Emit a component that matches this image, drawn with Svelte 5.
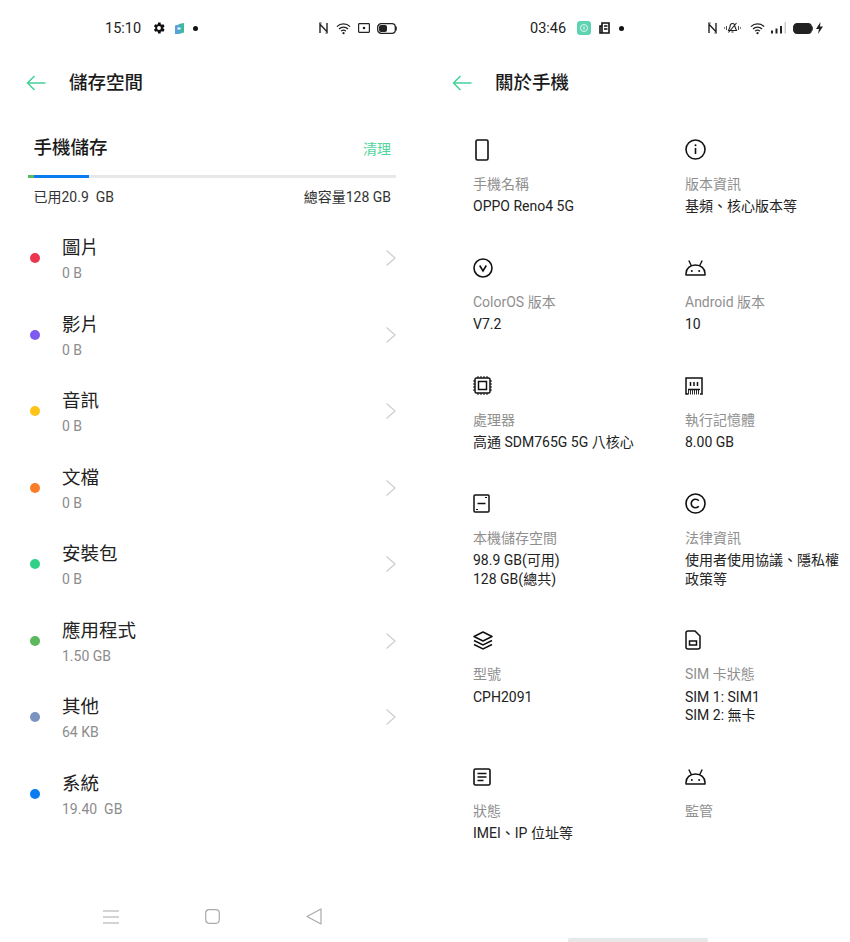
<script>
	const files = [
		{ name: '圖片', size: '0 B', color: '#e8374f', more: true },
		{ name: '影片', size: '0 B', color: '#7f5af0', more: true },
		{ name: '音訊', size: '0 B', color: '#fcc419', more: true },
		{ name: '文檔', size: '0 B', color: '#fb7c29', more: true },
		{ name: '安裝包', size: '0 B', color: '#2fd186', more: true },
		{ name: '應用程式', size: '1.50 GB', color: '#5cb85c', more: true },
		{ name: '其他', size: '64 KB', color: '#7b93c0', more: true },
		{ name: '系統', size: '19.40  GB', color: '#0a7cf0', more: false }
	];

	const specs = [
		{ icon: 'phone', label: '手機名稱', lines: ['OPPO Reno4 5G'] },
		{ icon: 'info', label: '版本資訊', lines: ['基頻、核心版本等'] },
		{ icon: 'version', label: 'ColorOS 版本', lines: ['V7.2'] },
		{ icon: 'android', label: 'Android 版本', lines: ['10'] },
		{ icon: 'cpu', label: '處理器', lines: ['高通 SDM765G 5G 八核心'] },
		{ icon: 'ram', label: '執行記憶體', lines: ['8.00 GB'] },
		{ icon: 'storage', label: '本機儲存空間', lines: ['98.9 GB(可用)', '128 GB(總共)'] },
		{ icon: 'legal', label: '法律資訊', lines: ['使用者使用協議、隱私權', '政策等'] },
		{ icon: 'layers', label: '型號', lines: ['CPH2091'] },
		{ icon: 'sim', label: 'SIM 卡狀態', lines: ['SIM 1: SIM1', 'SIM 2: 無卡'] },
		{ icon: 'status', label: '狀態', lines: ['IMEI、IP 位址等'] },
		{ icon: 'android', label: '監管', lines: [] }
	];
</script>

<div class="screen">
	<section class="panel">
		<div class="status left-status">
			<span class="time">15:10</span>
			<svg class="gear" width="14" height="14" viewBox="0 0 24 24"><path fill-rule="evenodd" d="M19.4 13a7.600 7.600 0 0 0 0-2l2.300-1.800-2.200-3.800-2.700 1.100a7.500 7.500 0 0 0-1.700-1L14.700 2.600h-4.400L9.900 5.500a7.500 7.500 0 0 0-1.700 1L5.500 5.400 3.300 9.200 5.600 11a7.600 7.600 0 0 0 0 2l-2.300 1.800 2.200 3.800 2.700-1.100a7.500 7.500 0 0 0 1.700 1l.4 2.900h4.400l.4-2.900a7.500 7.500 0 0 0 1.700-1l2.700 1.100 2.200-3.800zM12 15.300a3.300 3.300 0 1 1 0-6.600 3.300 3.300 0 0 1 0 6.600z" fill="#111"/></svg>
			<svg class="app" width="9" height="11" viewBox="0 0 9 11"><path d="M0 2.500l4-1V11H0z" fill="#5b9fe0"/><path d="M4 1l5-1v9.500L4 11z" fill="#3fb8a8"/><rect x="2.500" y="4.500" width="3" height="2" fill="#fff"/></svg>
			<span class="dot-note"></span>
			<span class="spacer"></span>
			<svg class="nfc" width="9" height="12" viewBox="0 0 9 12"><path d="M1 11V2.200L8 9.800V1" fill="none" stroke="#222" stroke-width="1.400"/><path d="M.5 1h2M6.500 11h2" stroke="#222" stroke-width="1.200"/></svg>
			<svg class="wifi-l" width="15" height="13" viewBox="0 0 16 13"><path d="M1 4.500a10 10 0 0 1 14 0M3.200 7a7 7 0 0 1 9.600 0M5.400 9.300a4 4 0 0 1 5.200 0" fill="none" stroke="#222" stroke-width="1.400"/><circle cx="8" cy="11.500" r="1.200" fill="#222"/></svg>
			<svg class="cast" width="12" height="10" viewBox="0 0 12 10"><rect x=".6" y=".6" width="10.800" height="8.800" rx=".8" fill="none" stroke="#222" stroke-width="1.200"/><circle cx="6" cy="5" r="1.300" fill="#222"/></svg>
			<svg class="batt" width="20" height="11" viewBox="0 0 20 11"><rect x=".7" y=".7" width="17.600" height="9.600" rx="3.400" fill="none" stroke="#222" stroke-width="1.300"/><rect x="2" y="2" width="8" height="7" rx="2" fill="#222"/><rect x="18.600" y="3.500" width="1.200" height="4" fill="#222"/></svg>
		</div>

		<header class="head">
			<svg class="back" width="20" height="16" viewBox="0 0 20 16"><path d="M19.500 8H1.500M8.500 1L1.500 8l7 7" fill="none" stroke="#45d199" stroke-width="1.500"/></svg>
			<h1 class="storage-title">儲存空間</h1>
		</header>

		<div class="usage-head">
			<h2>手機儲存</h2>
			<span class="clean">清理</span>
		</div>
		<div class="bar"><span class="bar-green"></span><span class="bar-blue"></span></div>
		<div class="usage-text">
			<span>已用20.9  GB</span>
			<span>總容量128 GB</span>
		</div>

		<ul class="files">
			{#each files as f}
				<li>
					<span class="dot" style:background={f.color}></span>
					<div class="file-text">
						<div class="file-name">{f.name}</div>
						<div class="file-size">{f.size}</div>
					</div>
					{#if f.more}
						<svg class="chev" width="12" height="18" viewBox="0 0 12 18"><path d="M1.500 1.500L10 9l-8.500 7.500" fill="none" stroke="#cfcfcf" stroke-width="1.300"/></svg>
					{/if}
				</li>
			{/each}
		</ul>

		<nav class="nav">
			<svg width="16" height="14" viewBox="0 0 16 14"><path d="M0 1h16M0 7h16M0 13h16" stroke="#aaa" stroke-width="1.200"/></svg>
			<svg width="15" height="15" viewBox="0 0 15 15"><rect x=".7" y=".7" width="13.600" height="13.600" rx="3.500" fill="none" stroke="#aaa" stroke-width="1.200"/></svg>
			<svg width="16" height="17" viewBox="0 0 16 17"><path d="M15 1v15L1 8.500z" fill="none" stroke="#aaa" stroke-width="1.200" stroke-linejoin="round"/></svg>
		</nav>
	</section>

	<section class="panel">
		<div class="status right-status">
			<span class="time">03:46</span>
			<svg class="badge" width="14" height="14" viewBox="0 0 14 14"><rect width="14" height="14" rx="3" fill="#5fd3b0"/><circle cx="7" cy="7" r="3.500" fill="none" stroke="#fff" stroke-width=".8"/><path d="M7 5.500v3" stroke="#fff"/></svg>
			<svg class="news" width="11" height="12" viewBox="0 0 11 12"><path d="M3 1h7v10H1V4h2zM3 4v7" fill="none" stroke="#111" stroke-width="1.600"/><path d="M5 4h3.500M5 7h3.500" stroke="#111" stroke-width="1.500"/></svg>
			<span class="dot-note"></span>
			<span class="spacer"></span>
			<svg class="nfc" width="9" height="12" viewBox="0 0 9 12"><path d="M1 11V2.200L8 9.800V1" fill="none" stroke="#222" stroke-width="1.400"/><path d="M.5 1h2M6.500 11h2" stroke="#222" stroke-width="1.200"/></svg>
			<svg class="mute" width="17" height="12" viewBox="0 0 17 12"><path d="M8.500 1.500c-2 0-2.500 2-2.500 3.500L4.500 8.500h8L11 5c0-1.500-.5-3.500-2.500-3.500zM7.500 10h2M4.500 10.500L12.500 1" fill="none" stroke="#222" stroke-width="1.100"/><path d="M2.500 4v4M.5 5.300v1.400M14.500 4v4M16.500 5.300v1.400" stroke="#333" stroke-width=".9"/></svg>
			<svg class="wifi-r" width="15" height="13" viewBox="0 0 16 13"><path d="M1 4.500a10 10 0 0 1 14 0M3.200 7a7 7 0 0 1 9.600 0M5.400 9.300a4 4 0 0 1 5.200 0" fill="none" stroke="#222" stroke-width="1.400"/><circle cx="8" cy="11.500" r="1.200" fill="#222"/></svg>
			<svg class="signal" width="15" height="12" viewBox="0 0 15 12"><rect x="0" y="8.500" width="2" height="3" fill="#222"/><rect x="4.500" y="6.500" width="2" height="5" fill="#222"/><rect x="9" y="4" width="2" height="7.500" fill="#222"/><rect x="13.500" y="0" width="1.500" height="11.500" fill="#ccc"/></svg>
			<svg class="batt-r" width="20" height="11" viewBox="0 0 20 11"><rect x=".7" y=".7" width="17.600" height="9.600" rx="3.400" fill="#222" stroke="#222" stroke-width="1.300"/><rect x="18.600" y="3.500" width="1.200" height="4" fill="#222"/></svg>
			<svg class="bolt" width="7" height="12" viewBox="0 0 7 12"><path d="M4.500 0L0 7h3L2 12l5-7.500H4z" fill="#222"/></svg>
		</div>

		<header class="head about-head">
			<svg class="back" width="20" height="16" viewBox="0 0 20 16"><path d="M19.500 8H1.500M8.500 1L1.500 8l7 7" fill="none" stroke="#45d199" stroke-width="1.500"/></svg>
			<h1 class="about-title">關於手機</h1>
		</header>

		<div class="specs">
			{#each specs as s}
				<div class="spec">
					<div class="icon">
						{#if s.icon === 'phone'}
							<svg class="nudge" width="14" height="22" viewBox="0 0 14 22"><rect x="1" y="1" width="12" height="20" rx="1.500" fill="none" stroke="#111" stroke-width="1.600"/></svg>
						{:else if s.icon === 'info'}
							<svg width="21" height="21" viewBox="0 0 21 21"><circle cx="10.500" cy="10.500" r="9.500" fill="none" stroke="#111" stroke-width="1.600"/><path d="M10.500 9v6" stroke="#111" stroke-width="1.600"/><circle cx="10.500" cy="6.300" r="1" fill="#111"/></svg>
						{:else if s.icon === 'version'}
							<svg width="20" height="20" viewBox="0 0 20 20"><circle cx="10" cy="10" r="9" fill="none" stroke="#111" stroke-width="1.600"/><path d="M6.700 7.500L10 13l3.300-5.500" fill="none" stroke="#111" stroke-width="1.600"/></svg>
						{:else if s.icon === 'android'}
							<svg width="21" height="16" viewBox="0 0 21 16"><path d="M1 15h19v-1.500C20 8.500 16 5 10.500 5S1 8.500 1 13.500z" fill="none" stroke="#111" stroke-width="1.500" stroke-linejoin="round"/><path d="M6.500 6L3.800 .5M14.500 6l2.700-5.500" stroke="#111" stroke-width="1.400"/><circle cx="6.800" cy="11" r="1" fill="#111"/><circle cx="14.200" cy="11" r="1" fill="#111"/></svg>
						{:else if s.icon === 'cpu'}
							<svg width="19" height="19" viewBox="0 0 19 19"><rect x="2" y="2" width="15" height="15" rx="1.500" fill="none" stroke="#111" stroke-width="1.500"/><rect x="5.500" y="5.500" width="8" height="8" fill="none" stroke="#111" stroke-width="1.500"/><path d="M5 0v2M8 0v2M11 0v2M14 0v2M5 17v2M8 17v2M11 17v2M14 17v2M0 5h2M0 8h2M0 11h2M0 14h2M17 5h2M17 8h2M17 11h2M17 14h2" stroke="#111"/></svg>
						{:else if s.icon === 'ram'}
							<svg width="18" height="18" viewBox="0 0 18 18"><path d="M3 17H1V1h16v16h-2M3 12.500h12" fill="none" stroke="#111" stroke-width="1.500"/><path d="M5.500 5v4M9 5v4M12.500 5v4" stroke="#111" stroke-width="1.500"/><path d="M3.500 13v4.500M5.500 13v4.500M7.500 13v4.500M9.500 13v4.500M11.500 13v4.500M13.500 13v4.500" stroke="#111" stroke-width=".9"/></svg>
						{:else if s.icon === 'storage'}
							<svg width="17" height="19" viewBox="0 0 17 19"><rect x="1" y="1" width="15" height="17" rx="1" fill="none" stroke="#111" stroke-width="1.500"/><path d="M4.500 9.500h8" stroke="#111" stroke-width="1.500"/><path d="M3 15.500h2M12 3.500h2" stroke="#111"/></svg>
						{:else if s.icon === 'legal'}
							<svg width="21" height="21" viewBox="0 0 21 21"><circle cx="10.500" cy="10.500" r="9.500" fill="none" stroke="#111" stroke-width="1.600"/><path d="M13.800 7.700a4.300 4.300 0 1 0 0 5.600" fill="none" stroke="#111" stroke-width="1.600"/></svg>
						{:else if s.icon === 'layers'}
							<svg width="20" height="19" viewBox="0 0 20 19"><path d="M10 1l9 4.500-9 4.500-9-4.500z" fill="none" stroke="#111" stroke-width="1.500" stroke-linejoin="round"/><path d="M1 9.500l9 4.500 9-4.500M1 13.500l9 4.500 9-4.500" fill="none" stroke="#111" stroke-width="1.500"/></svg>
						{:else if s.icon === 'sim'}
							<svg width="16" height="20" viewBox="0 0 16 20"><path d="M3 1h7l5 5v11a2 2 0 0 1-2 2H3a2 2 0 0 1-2-2V3a2 2 0 0 1 2-2z" fill="none" stroke="#111" stroke-width="1.500"/><rect x="4.500" y="11" width="7" height="4" fill="none" stroke="#111" stroke-width="1.500"/></svg>
						{:else if s.icon === 'status'}
							<svg width="18" height="18" viewBox="0 0 18 18"><rect x="1" y="1" width="16" height="16" rx="1.500" fill="none" stroke="#111" stroke-width="1.600"/><path d="M4.500 5.500h9M4.500 9h9M4.500 12.500h6" stroke="#111" stroke-width="1.400"/></svg>
						{/if}
					</div>
					<div class="spec-label">{s.label}</div>
					{#each s.lines as line}
						<div class="spec-value">{line}</div>
					{/each}
				</div>
			{/each}
		</div>

		<div class="home-bar"></div>
	</section>
</div>

<style>
	:global(body) {
		background: #fff;
	}

	.screen {
		display: flex;
		width: 850px;
		height: 942px;
		overflow: hidden;
		background: #fff;
		color: #1a1a1a;
		font-family: Roboto, 'Noto Sans CJK TC', sans-serif;
	}

	.panel {
		display: flex;
		flex-direction: column;
		width: 425px;
		height: 942px;
		box-sizing: border-box;
	}

	.status {
		display: flex;
		align-items: center;
		height: 16px;
		margin-top: 20px;
	}

	.status svg {
		flex: none;
	}

	.left-status {
		padding: 0 28px 0 105px;
	}

	.right-status {
		padding: 0 27px 0 105px;
	}

	.time {
		width: 37px;
		font-size: 14.5px;
		color: #222;
	}

	.gear {
		margin-left: 10px;
	}

	.app {
		margin-left: 9px;
	}

	.nfc {
		margin-right: 8px;
	}

	.wifi-l,
	.cast {
		margin-right: 7px;
	}

	.badge {
		margin-left: 10px;
	}

	.news {
		margin-left: 8px;
	}

	.right-status .nfc {
		margin-right: 7px;
	}

	.mute {
		margin-right: 9px;
	}

	.wifi-r {
		margin-right: 6px;
	}

	.signal {
		margin-right: 7px;
	}

	.bolt {
		margin-left: 3px;
	}

	.dot-note {
		width: 5px;
		height: 5px;
		margin-left: 9px;
		border-radius: 50%;
		background: #111;
	}

	.spacer {
		flex: 1;
	}

	.head {
		display: flex;
		align-items: center;
		height: 28px;
		margin-top: 33px;
		padding-left: 26px;
	}

	.head h1 {
		margin: 0;
		font-size: 18.5px;
		font-weight: 500;
		line-height: 28px;
		color: #1a1a1a;
	}

	.storage-title {
		padding-left: 23px;
	}

	.about-head {
		padding-left: 27px;
	}

	.about-title {
		padding-left: 23px;
	}

	.usage-head {
		display: flex;
		align-items: center;
		justify-content: space-between;
		margin-top: 37px;
		padding: 0 34px 0 33.5px;
	}

	.usage-head h2 {
		margin: 0;
		font-size: 18.5px;
		font-weight: 500;
		line-height: 28px;
	}

	.clean {
		font-size: 14px;
		color: #4fd6a0;
	}

	.bar {
		display: flex;
		height: 3px;
		margin: 13px 29px 0 28px;
		background: #e8e8e8;
	}

	.bar-green {
		width: 6px;
		background: #5cb85c;
	}

	.bar-blue {
		width: 55px;
		background: #0a7cf0;
	}

	.usage-text {
		display: flex;
		justify-content: space-between;
		margin-top: 10px;
		padding: 0 34px 0 33.5px;
		font-size: 14px;
		line-height: 18px;
		color: #333;
		white-space: pre;
	}

	.files {
		margin: 14px 0 0;
		padding: 0;
		list-style: none;
	}

	.files li {
		display: flex;
		align-items: center;
		height: 76.5px;
		padding: 0 28px 0 30px;
		box-sizing: border-box;
	}

	.dot {
		flex: none;
		width: 10px;
		height: 10px;
		border-radius: 50%;
	}

	.file-text {
		flex: 1;
		margin-left: 22px;
		padding-top: 1px;
	}

	.file-name {
		font-size: 18.5px;
		line-height: 27px;
		color: #222;
	}

	.file-size {
		margin-top: 2px;
		font-size: 14px;
		line-height: 18px;
		color: #8c8c8c;
		white-space: pre;
	}

	.nav {
		display: flex;
		align-items: center;
		margin-top: auto;
		margin-bottom: 17px;
		padding-left: 103px;
		gap: 86px;
	}

	.specs {
		display: grid;
		grid-template-columns: 212px 1fr;
		row-gap: 40px;
		margin-top: 40.5px;
		padding-left: 48px;
	}

	.icon {
		display: flex;
		align-items: center;
		height: 24px;
	}

	.nudge {
		margin-left: 2px;
	}

	.spec-label {
		margin-top: 11px;
		font-size: 14px;
		line-height: 23px;
		color: #8f8f8f;
	}

	.spec-value {
		font-size: 14px;
		line-height: 18.5px;
		color: #222;
	}

	.spec-label + .spec-value {
		margin-top: 1.5px;
	}

	.home-bar {
		align-self: flex-start;
		width: 140px;
		height: 4px;
		margin: auto 0 0 143px;
		background: #e8e8e8;
		border-radius: 2px 2px 0 0;
	}
</style>
